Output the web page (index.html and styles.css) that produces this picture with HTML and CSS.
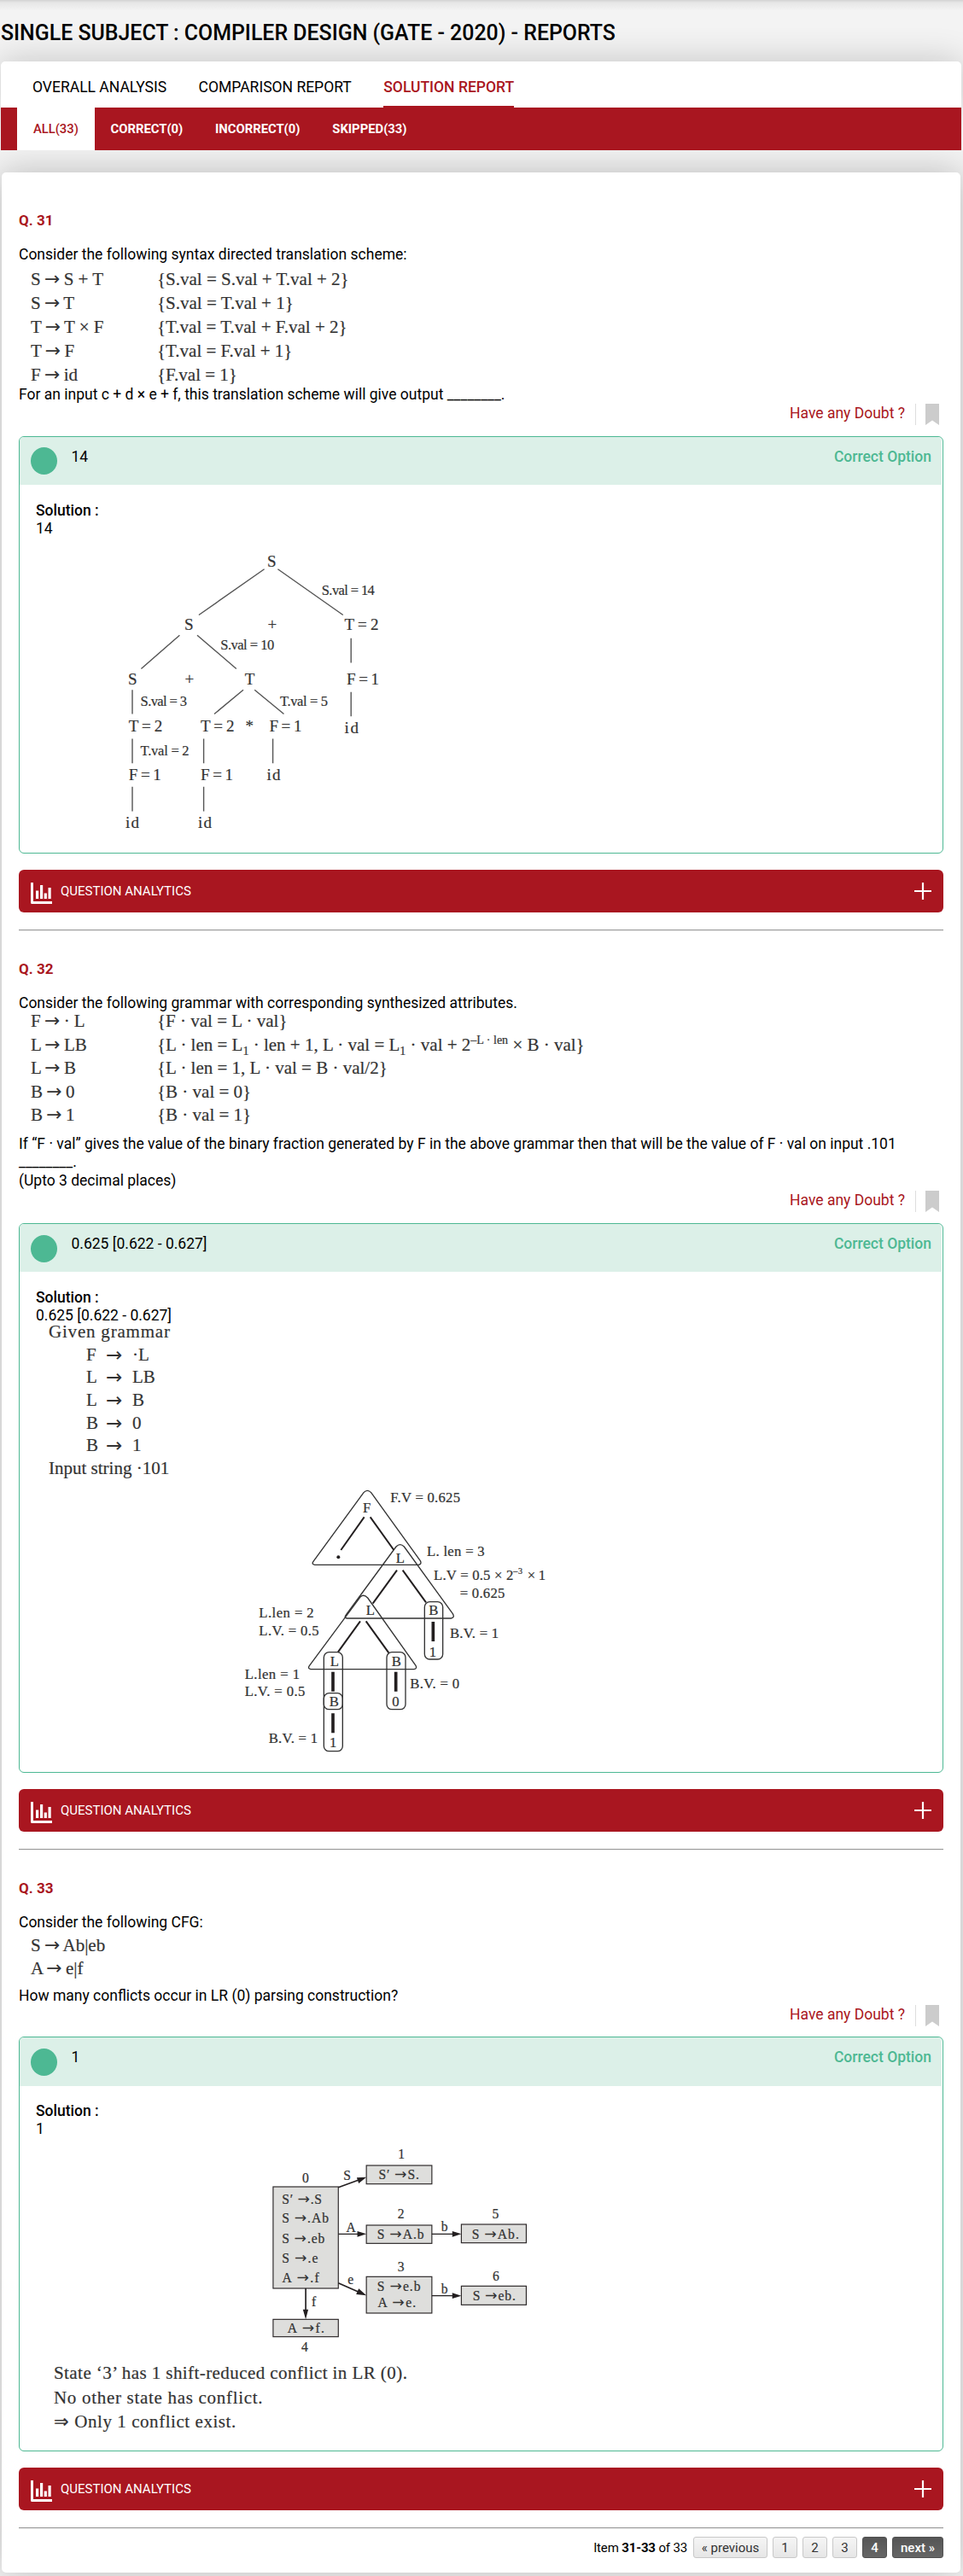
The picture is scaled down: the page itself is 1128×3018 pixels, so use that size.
FILE: index.html
```html
<!DOCTYPE html>
<html lang="en">
<head>
<meta charset="utf-8">
<title>Compiler Design (GATE - 2020) - Reports</title>
<link rel="stylesheet" href="styles.css">
</head>
<body>
<svg class="defs" width="0" height="0" aria-hidden="true">
  <symbol id="chart" viewBox="0 0 25 25"><path fill="#fff" d="M0 0h3v22h22v3H1.500Q0 25 0 23.500zM6 9.500h3.200V19H6zM11 3h3.200v16H11zM15.700 12.500h3.200V19h-3.200zM20.500 6h3.200v13h-3.200z"/></symbol>
  <symbol id="plus" viewBox="0 0 20 20"><path fill="#fff" d="M8.900 0h2.200v8.900H20v2.200h-8.900V20H8.900v-8.900H0V8.900h8.900z"/></symbol>
  <symbol id="mark" viewBox="0 0 16 25"><path fill="#ccc" d="M0 0h16v25l-8-5.500L0 25z"/></symbol>
</svg>

<h1 class="title">SINGLE SUBJECT : COMPILER DESIGN (GATE - 2020) - REPORTS</h1>

<nav class="tabs">
  <a class="tab">OVERALL ANALYSIS</a>
  <a class="tab">COMPARISON REPORT</a>
  <a class="tab tab-active">SOLUTION REPORT</a>
</nav>
<nav class="filters">
  <a class="filter filter-active">ALL(33)</a>
  <a class="filter">CORRECT(0)</a>
  <a class="filter">INCORRECT(0)</a>
  <a class="filter">SKIPPED(33)</a>
</nav>

<main class="card">
  <section class="question q31">
    <h2 class="qno">Q. 31</h2>
    <p class="text">Consider the following syntax directed translation scheme:</p>
    <div class="grammar">
      <span>S <b>→</b> S + T</span><span>{S.val = S.val + T.val + 2}</span>
      <span>S <b>→</b> T</span><span>{S.val = T.val + 1}</span>
      <span>T <b>→</b> T × F</span><span>{T.val = T.val + F.val + 2}</span>
      <span>T <b>→</b> F</span><span>{T.val = F.val + 1}</span>
      <span>F <b>→</b> id</span><span>{F.val = 1}</span>
    </div>
    <p class="text ask">For an input c + d × e + f, this translation scheme will give output ________.</p>
    <div class="doubt"><a>Have any Doubt ?</a><i></i><svg><use href="#mark"/></svg></div>
    <div class="answer">
      <div class="answer-head"><span class="dot"></span><span class="value">14</span><span class="correct">Correct Option</span></div>
      <div class="solution">
        <p class="text strong">Solution :</p>
        <p class="text">14</p>
        <svg class="fig fig31" viewBox="42 629.500 440 369">
          <g class="edges">
            <path d="M309.600 666.300L232.900 720M325.400 666.300L401.800 720M210.400 743.700L165.400 783M231 743.700L276.800 783M411.200 747.300V776M411.200 810.300V838.700M285 807.700L251 836M298.200 807.700L332.500 836M155 807.700V836M155 865V893.700M238.600 865V893.700M319.600 865V893.700M155 921.300V950M238.600 921.300V950"/>
          </g>
          <g font-size="19">
            <text x="313" y="663.300">S</text>
            <text x="216" y="737.300">S</text><text x="313.500" y="737.300">+</text><text x="403.600" y="737.300" textLength="40">T = 2</text>
            <text x="150" y="801">S</text><text x="216.500" y="801">+</text><text x="286.700" y="801">T</text><text x="406" y="801" textLength="38">F = 1</text>
            <text x="150.700" y="856" textLength="39.500">T = 2</text><text x="235" y="856" textLength="39.500">T = 2</text><text x="287.500" y="856">*</text><text x="315.400" y="856" textLength="38">F = 1</text>
            <text x="403.600" y="858.700" textLength="16.500">id</text>
            <text x="150.700" y="913.300" textLength="38">F = 1</text><text x="235" y="913.300" textLength="38">F = 1</text><text x="312.500" y="913.300" textLength="16">id</text>
            <text x="147" y="969.300" textLength="16">id</text><text x="232" y="969.300" textLength="16">id</text>
          </g>
          <g font-size="16.500">
            <text x="376.800" y="696.700" textLength="62">S.val = 14</text>
            <text x="258.200" y="760" textLength="63">S.val = 10</text>
            <text x="164.600" y="826" textLength="54.500">S.val = 3</text>
            <text x="327.900" y="826" textLength="56">T.val = 5</text>
            <text x="164.600" y="884.700" textLength="57">T.val = 2</text>
          </g>
        </svg>
      </div>
    </div>
    <div class="analytics"><svg class="ic-chart"><use href="#chart"/></svg><span>QUESTION ANALYTICS</span><svg class="ic-plus"><use href="#plus"/></svg></div>
    <hr class="rule">
  </section>

  <section class="question q32">
    <h2 class="qno">Q. 32</h2>
    <p class="text">Consider the following grammar with corresponding synthesized attributes.</p>
    <div class="grammar">
      <span>F <b>→</b> · L</span><span>{F · val = L · val}</span>
      <span>L <b>→</b> LB</span><span>{L · len = L<sub>1</sub> · len + 1, L · val = L<sub>1</sub> · val + 2<sup>–L · len</sup> × B · val}</span>
      <span>L <b>→</b> B</span><span>{L · len = 1, L · val = B · val/2}</span>
      <span>B <b>→</b> 0</span><span>{B · val = 0}</span>
      <span>B <b>→</b> 1</span><span>{B · val = 1}</span>
    </div>
    <p class="text ask">If “F · val” gives the value of the binary fraction generated by F in the above grammar then that will be the value of F · val on input .101 ________.<br>(Upto 3 decimal places)</p>
    <div class="doubt"><a>Have any Doubt ?</a><i></i><svg><use href="#mark"/></svg></div>
    <div class="answer">
      <div class="answer-head"><span class="dot"></span><span class="value">0.625 [0.622 - 0.627]</span><span class="correct">Correct Option</span></div>
      <div class="solution">
        <p class="text strong">Solution :</p>
        <p class="text">0.625 [0.622 - 0.627]</p>
        <div class="given">
          <p class="given-title">Given grammar</p>
          <div class="productions">
            <span>F</span><b>→</b><span>·L</span>
            <span>L</span><b>→</b><span>LB</span>
            <span>L</span><b>→</b><span>B</span>
            <span>B</span><b>→</b><span>0</span>
            <span>B</span><b>→</b><span>1</span>
          </div>
          <p>Input string ·101</p>
        </div>
        <svg class="fig fig32" viewBox="0 12 1260 1023">
          <g fill="none" stroke="#333" stroke-width="4" stroke-linejoin="round">
            <path d="M498 56Q511 42 524 56L697 296Q703 308 690 310H326Q314 308 321 298Z"/>
            <path d="M612 246Q626 232 640 246L811 482Q819 496 805 498H440Q428 496 436 486Z"/>
            <path d="M487 422Q498 412 512 426L681 664Q687 675 674 677H312Q300 675 307 665Z"/>
            <rect x="358" y="617" width="66" height="348" rx="18"/>
            <rect x="358" y="761" width="66" height="57" rx="18"/>
            <rect x="579" y="617" width="66" height="201" rx="18"/>
            <rect x="712" y="440" width="64" height="202" rx="18"/>
          </g>
          <g fill="none" stroke="#231f20" stroke-width="6">
            <path d="M500 142L418 258M521 142L604 258M615 329L530 446M635 329L717 442M486 508L408 616M506 508L586 619"/>
            <path stroke-width="11" d="M742 510V579M390 686V755M611 686V755M390 832V901"/>
          </g>
          <circle cx="409" cy="283" r="6" fill="#231f20"/>
          <g font-size="50">
            <text x="495" y="126">F</text><text x="611" y="302">L</text><text x="506" y="486">L</text><text x="727" y="486">B</text><text x="728" y="633">1</text>
            <text x="380" y="667">L</text><text x="596" y="667">B</text><text x="377" y="808">B</text><text x="598" y="808">0</text><text x="378" y="952">1</text>
            <text x="592" y="89" textLength="245">F.V = 0.625</text>
            <text x="720" y="280" textLength="203">L. len = 3</text>
            <text x="744" y="363" textLength="280">L.V = 0.5 × 2</text><text x="1024" y="341" font-size="30" textLength="32">–3</text><text x="1073" y="363" textLength="64">× 1</text>
            <text x="836" y="426" textLength="158">= 0.625</text>
            <text x="130" y="494" textLength="193">L.len = 2</text><text x="130" y="558" textLength="211">L.V. = 0.5</text>
            <text x="801" y="568" textLength="171">B.V. = 1</text>
            <text x="80" y="711" textLength="193">L.len = 1</text><text x="80" y="771" textLength="212">L.V. = 0.5</text>
            <text x="661" y="744" textLength="173">B.V. = 0</text>
            <text x="164" y="936" textLength="172">B.V. = 1</text>
          </g>
        </svg>
      </div>
    </div>
    <div class="analytics"><svg class="ic-chart"><use href="#chart"/></svg><span>QUESTION ANALYTICS</span><svg class="ic-plus"><use href="#plus"/></svg></div>
    <hr class="rule">
  </section>

  <section class="question q33">
    <h2 class="qno">Q. 33</h2>
    <p class="text">Consider the following CFG:</p>
    <div class="grammar">
      <span>S <b>→</b> Ab|eb</span><span></span>
      <span>A <b>→</b> e|f</span><span></span>
    </div>
    <p class="text ask">How many conflicts occur in LR (0) parsing construction?</p>
    <div class="doubt"><a>Have any Doubt ?</a><i></i><svg><use href="#mark"/></svg></div>
    <div class="answer">
      <div class="answer-head"><span class="dot"></span><span class="value">1</span><span class="correct">Correct Option</span></div>
      <div class="solution">
        <p class="text strong">Solution :</p>
        <p class="text">1</p>
        <svg class="fig fig33" viewBox="0 15 1024 780" preserveAspectRatio="none">
          <g fill="#dededc" stroke="#2b2728" stroke-width="3.500">
            <rect x="60" y="186" width="230" height="357"/>
            <rect x="389" y="111" width="231" height="65"/>
            <rect x="389" y="321" width="231" height="64"/>
            <rect x="389" y="502" width="231" height="128"/>
            <rect x="724" y="318" width="229" height="65"/>
            <rect x="724" y="535" width="229" height="66"/>
            <rect x="60" y="652" width="230" height="61"/>
          </g>
          <g stroke="#231f20" stroke-width="3.500">
            <path stroke-width="5" d="M290 188L360 163M290 524L360 555M175 543V620"/>
            <path d="M290 352H360M620 352H695M620 569H695"/>
          </g>
          <path fill="#231f20" d="M389 152L355 154L362 174ZM389 568L362 544L353 564ZM175 652L165 617H184ZM389 352L357 342V362ZM724 352L692 342V362ZM724 569L692 559V579Z"/>
          <g font-size="47">
            <text x="501" y="87">1</text><text x="163" y="170">0</text><text x="499" y="298">2</text><text x="833" y="298">5</text><text x="499" y="482">3</text><text x="834" y="516">6</text><text x="160" y="764">4</text>
            <text x="308" y="163">S</text><text x="318" y="344">A</text><text x="653" y="343">b</text><text x="323" y="529">e</text><text x="653" y="560">b</text><text x="196" y="605">f</text>
            <text x="432" y="159" textLength="143">S′ <tspan class="arrow">→</tspan>S.</text>
            <text x="91" y="245" textLength="141">S′ <tspan class="arrow">→</tspan>.S</text>
            <text x="91" y="312" textLength="165">S <tspan class="arrow">→</tspan>.Ab</text>
            <text x="91" y="384" textLength="151">S <tspan class="arrow">→</tspan>.eb</text>
            <text x="91" y="452" textLength="127">S <tspan class="arrow">→</tspan>.e</text>
            <text x="92" y="523" textLength="130">A <tspan class="arrow">→</tspan>.f</text>
            <text x="427" y="368" textLength="165">S <tspan class="arrow">→</tspan>A.b</text>
            <text x="761" y="368" textLength="166">S <tspan class="arrow">→</tspan>Ab.</text>
            <text x="427" y="552" textLength="153">S <tspan class="arrow">→</tspan>e.b</text>
            <text x="429" y="610" textLength="135">A <tspan class="arrow">→</tspan>e.</text>
            <text x="764" y="584" textLength="151">S <tspan class="arrow">→</tspan>eb.</text>
            <text x="111" y="700" textLength="130">A <tspan class="arrow">→</tspan>f.</text>
          </g>
        </svg>
        <div class="notes">
          <p class="n1">State ‘3’ has 1 shift-reduced conflict in LR (0).</p>
          <p class="n2">No other state has conflict.</p>
          <p class="n3">⇒ Only 1 conflict exist.</p>
        </div>
      </div>
    </div>
    <div class="analytics"><svg class="ic-chart"><use href="#chart"/></svg><span>QUESTION ANALYTICS</span><svg class="ic-plus"><use href="#plus"/></svg></div>
    <hr class="rule">
  </section>

  <footer class="pager">
    <span class="summary">Item <b>31-33</b> of 33</span>
    <a class="btn prev">« previous</a><a class="btn">1</a><a class="btn">2</a><a class="btn">3</a><a class="btn dark">4</a><a class="btn dark next">next »</a>
  </footer>
</main>
</body>
</html>
```
FILE: styles.css
```css
* { box-sizing: border-box; }
body {
  margin: 0;
  height: 3018px;
  overflow: hidden;
  font: 17.5px/21px Roboto, "Liberation Sans", sans-serif;
  color: #000;
  background: linear-gradient(#d2d2d2, #e6e6e6 3px, #f3f3f3 12px) 0 0 / 100% 12px no-repeat, #f3f3f3;
}
h1, h2, p { margin: 0; }
.defs { display: block; height: 0; }

.title { padding: 24px 0 18px 1px; font-size: 24.9px; line-height: 30px; font-weight: 500; }

.tabs {
  display: flex;
  gap: 37.5px;
  height: 54px;
  margin: 0 2px 0 1px;
  padding-left: 37px;
  background: #fff;
  border-radius: 5px 5px 0 0;
  box-shadow: 0 0 40px rgba(0, 0, 0, .2);
}
.tab { height: 54px; padding-top: 20px; }
.tab-active { font-weight: 500; color: #a91620; border-bottom: 2px solid #a91620; }
.filters {
  position: relative;
  display: flex;
  height: 50px;
  margin: 0 2px 0 1px;
  padding-left: 19px;
  background: #a91620;
}
.filter { padding: 0 18.9px; font-size: 14.8px; line-height: 50px; font-weight: 700; color: #fff; }
.filter-active { font-weight: 500; color: #a91620; background: #fff; }

.card {
  height: 2812px;
  margin: 26px 3px 0 2px;
  padding: 12px 20px 0;
  background: #fff;
  border-radius: 5px;
  box-shadow: 0 0 40px rgba(0, 0, 0, .24);
}
.question { padding-top: 34px; }
.qno { font-size: 17px; line-height: 21px; font-weight: 700; color: #a91620; margin-bottom: 19px; }

.grammar {
  display: grid;
  grid-template-columns: 148px 1fr;
  grid-auto-rows: 28px;
  padding-left: 14px;
  font: 21px/28px "Liberation Serif", serif;
  color: #333;
  -webkit-text-stroke: .2px #333;
  white-space: nowrap;
}
.grammar b { font: 22px/0 "DejaVu Sans", sans-serif; margin: 0 -1px; -webkit-text-stroke: 0; }
.q31 .grammar { margin: 4px 0 -1px; }
.q32 .grammar, .q33 .grammar { grid-auto-rows: 27.5px; line-height: 27.5px; }
.q32 .grammar { margin: -3px 0 9px; }
.q33 .grammar { margin: 2.5px 0 7.5px; }
.grammar sub, .grammar sup { font-size: 14px; line-height: 0; }
.q32 .ask { line-height: 21.75px; height: 65.5px; }

.doubt { display: flex; justify-content: flex-end; height: 25px; margin-bottom: 13px; padding-right: 5px; line-height: 25px; color: #a91620; }
.q33 .doubt { margin-bottom: 12px; }
.doubt a { padding-right: 12px; line-height: 22px; }
.doubt i { width: 1px; background: #ddd; margin-right: 11px; }
.doubt svg { width: 16px; height: 25px; }

.answer { border: 1px solid #4db893; border-radius: 6px; }
.q31 .answer { height: 489px; }
.q32 .answer { height: 644px; }
.q33 .answer { height: 486px; }
.answer-head {
  display: flex;
  height: 56px;
  margin-right: 1px;
  padding: 13px 12px 0 13px;
  background: #dcf0e8;
  border-radius: 5px 5px 0 0;
}
.dot { width: 31px; height: 32px; border-radius: 50%; background: #4db893; }
.value { margin-left: 16.500px; }
.correct { margin-left: auto; font-weight: 500; color: #4db893; }
.q31 .answer-head { padding-top: 12px; }
.q31 .value, .q31 .correct { padding-top: 1px; }
.q33 .answer-head { height: 57px; }
.solution { padding: 20px 0 0 19px; }
.q33 .solution { padding-top: 19px; }
.strong { font-weight: 500; }

.fig { display: block; font-family: "Liberation Serif", serif; fill: #333; }
.fig text { stroke: #333; stroke-width: .2px; }
.fig32 text, .fig33 text { stroke-width: .7px; }
.fig .arrow { font-family: "DejaVu Sans", sans-serif; font-size: 52px; stroke: none; }
.fig31 { width: 440px; height: 369px; }
.fig32 { width: 420px; height: 341px; margin-left: 218px; }
.fig33 { width: 340px; height: 260px; margin-left: 258px; }
.edges { fill: none; stroke: #555; stroke-width: 1.4; }

.given {
  height: 187px;
  margin-top: -5px;
  padding-left: 15px;
  font: 21px/26.7px "Liberation Serif", serif;
  color: #333;
  -webkit-text-stroke: .2px #333;
}
.given-title { letter-spacing: .8px; }
.productions { display: grid; grid-template-columns: 23px 31px auto; grid-auto-rows: 26.7px; padding-left: 44px; }
.productions b { font: 23px/26.7px "DejaVu Sans", sans-serif; -webkit-text-stroke: 0; }

.notes { padding: 1px 0 0 21px; font: 21px/28.5px "Liberation Serif", serif; color: #333; -webkit-text-stroke: .2px #333; }
.n1 { letter-spacing: .43px; }
.n2 { letter-spacing: .7px; }
.n3 { letter-spacing: .55px; }

.analytics {
  display: flex;
  align-items: center;
  height: 50px;
  margin-top: 19px;
  padding: 0 14px;
  color: #fff;
  background: #a91620;
  border-radius: 6px;
  font-size: 15px;
}
.analytics span { margin-left: 10px; padding-top: 1px; }
.ic-chart { width: 25px; height: 25px; margin-top: 5px; }
.ic-plus { width: 20px; height: 20px; margin-left: auto; }
.rule { height: 2px; margin: 20px 0 0; border: 0; border-top: 1px solid #999; border-bottom: 1px solid #eee; }

.pager { display: flex; justify-content: flex-end; gap: 6px; padding-top: 9px; font-size: 15px; line-height: 26px; }
.summary { margin-right: 1px; letter-spacing: -.15px; white-space: nowrap; }
.btn {
  width: 29px;
  height: 25px;
  border: 1px solid #c8c8c8;
  border-radius: 3px;
  line-height: 25px;
  text-align: center;
  color: #333;
  background: linear-gradient(#f5f5f5, #e6e6e6);
  white-space: nowrap;
}
.prev { width: 87px; }
.dark { color: #fff; font-weight: 500; border-color: #505050; background: linear-gradient(#555, #666); }
.next { width: 60px; }
```
